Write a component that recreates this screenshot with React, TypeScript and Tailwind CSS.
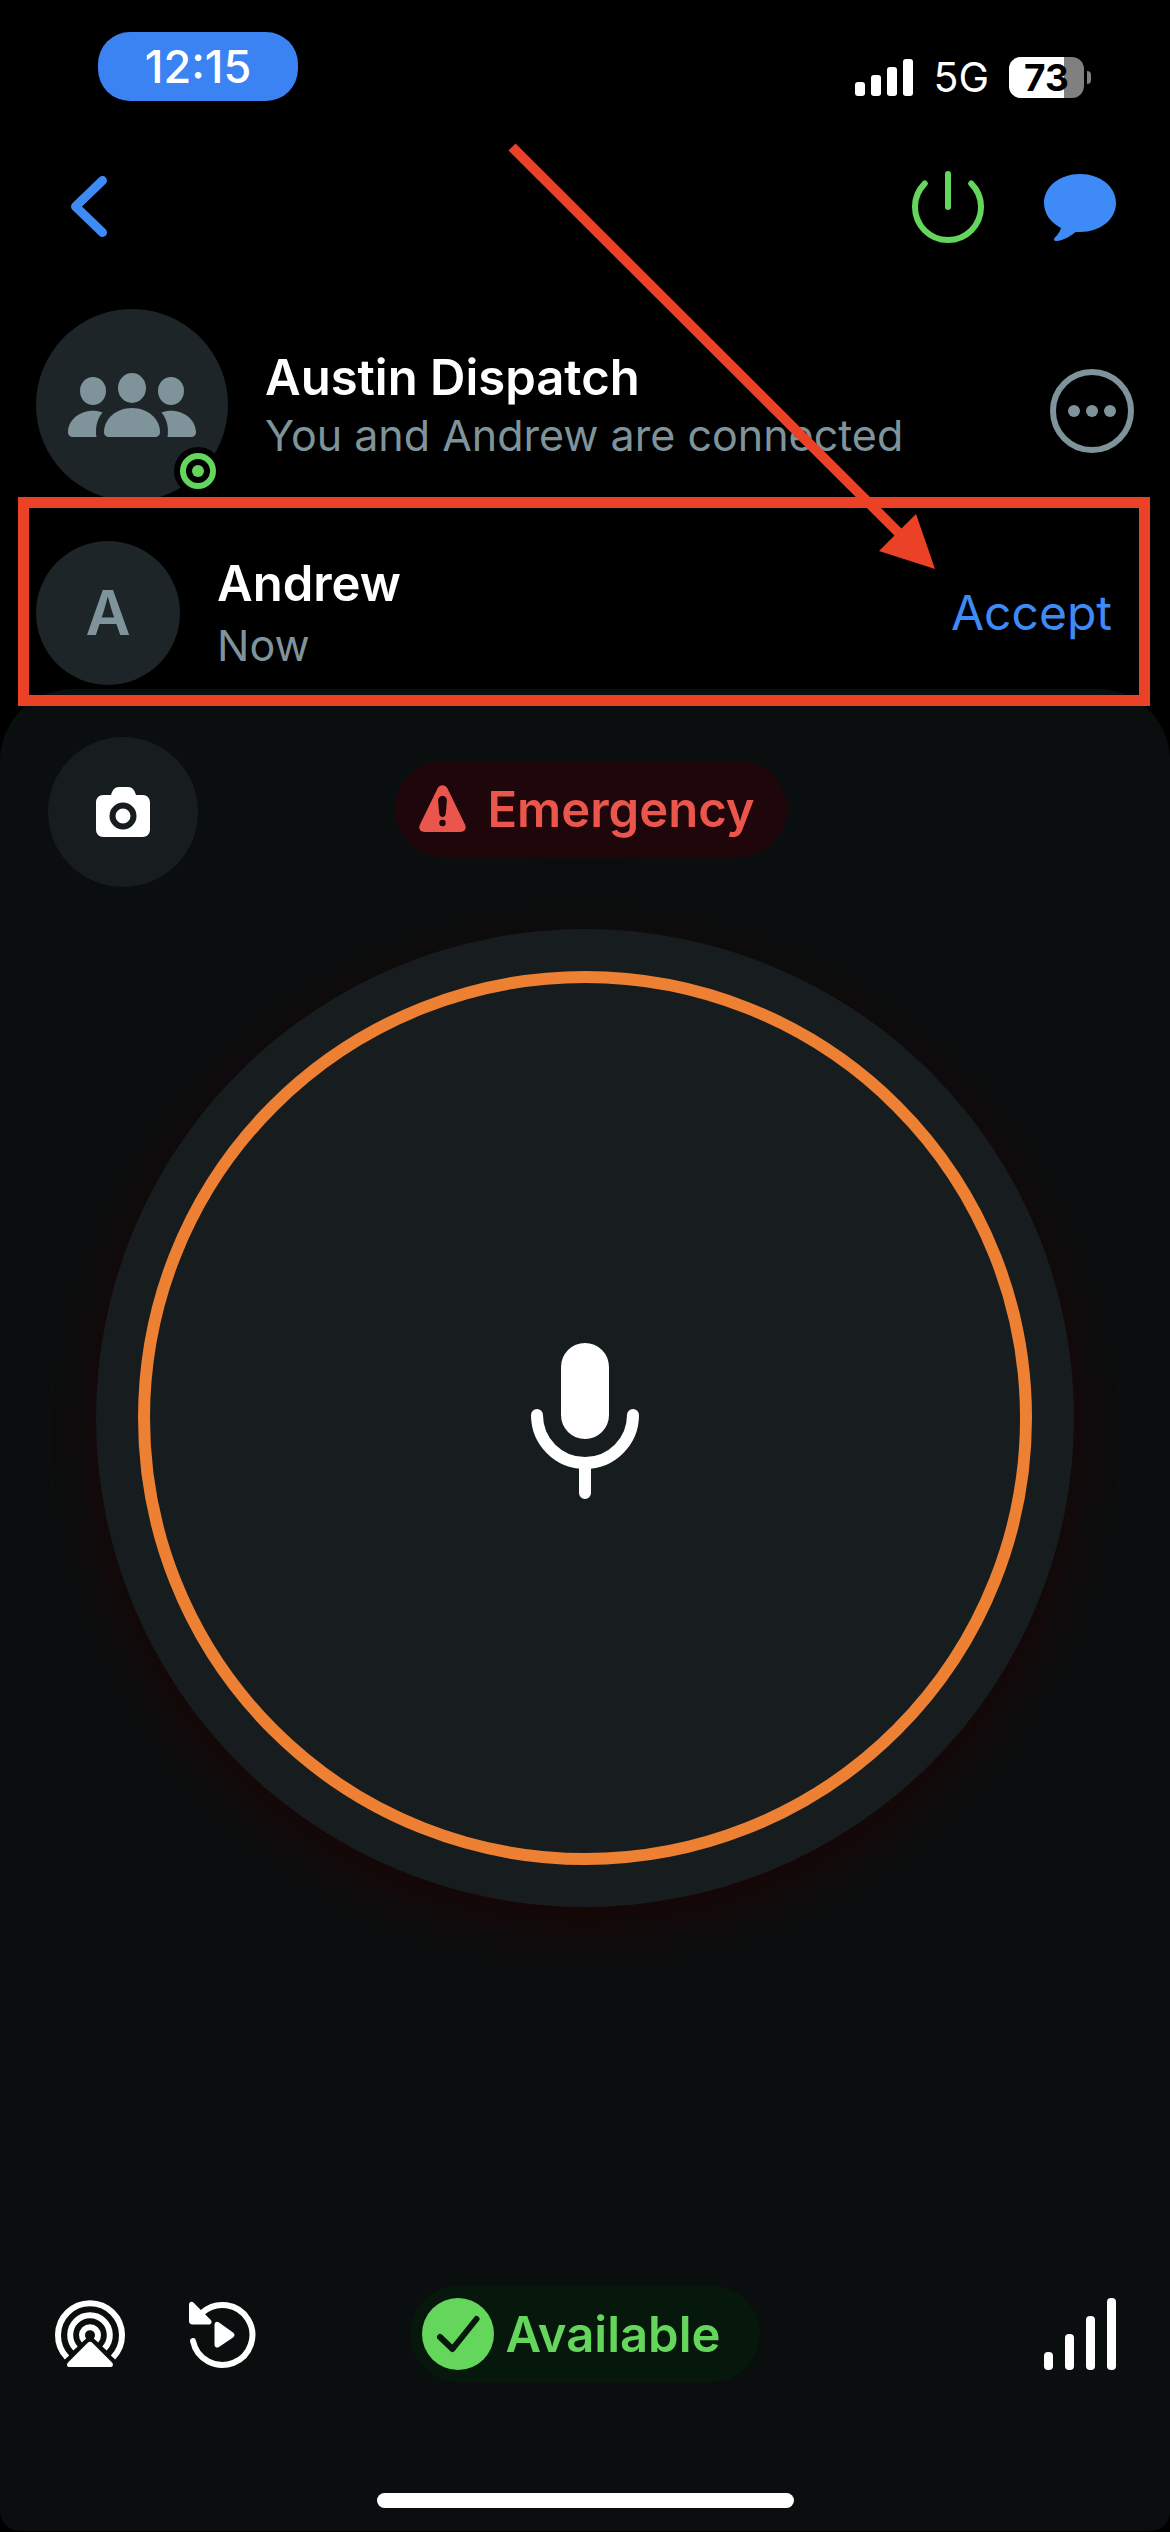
import type { ReactNode } from "react";

function SignalBars() {
  return (
    <svg width="58" height="38" viewBox="0 0 58 38" fill="white" aria-hidden="true">
      <rect x="0" y="23" width="10" height="14" rx="3" />
      <rect x="16" y="16" width="10" height="21" rx="3" />
      <rect x="32" y="8" width="10" height="29" rx="3" />
      <rect x="48" y="0" width="10" height="37" rx="3" />
    </svg>
  );
}

function Battery({ level }: { level: number }) {
  return (
    <div className="flex items-center gap-[3px]">
      <div className="relative flex h-[41px] w-[75px] items-center justify-center rounded-[12px] bg-[#808080]">
        <div className="absolute inset-y-0 left-0 rounded-l-[12px] bg-white" style={{ width: `${level}%` }} />
        <span className="relative text-[37px] leading-[41px] font-bold text-black">{level}</span>
      </div>
      <div className="h-[13px] w-1 rounded-r-full bg-[#808080]" />
    </div>
  );
}

function StatusBar() {
  return (
    <div className="flex items-end justify-between pr-[79px] pl-[98px]">
      <div className="flex h-[69px] w-[200px] items-center justify-center rounded-[32px] bg-[#3b82f3] text-[45px] leading-none font-medium">
        12:15
      </div>
      <div className="flex items-center gap-5 pb-[3px]">
        <SignalBars />
        <span className="text-[41px] leading-[41px]">5G</span>
        <Battery level={73} />
      </div>
    </div>
  );
}

function NavBar() {
  return (
    <nav className="mt-[70px] flex items-center justify-between pr-[54px] pl-[65px]">
      <button type="button" aria-label="Back">
        <svg width="48" height="72" viewBox="0 0 48 72" fill="none" stroke="#3e8bf7" strokeWidth="9" strokeLinecap="round" strokeLinejoin="round">
          <path d="M37.5 9.5 10.5 35.5l27 26" />
        </svg>
      </button>
      <div className="flex items-center gap-[60px]">
        <button type="button" aria-label="Go offline">
          <svg width="72" height="72" viewBox="0 0 72 72" fill="none" stroke="#65d65c" strokeWidth="6" strokeLinecap="round">
            <path d="M36 3v33" />
            <path d="M12.8 12.5a33 33 0 1 0 46.4 0" />
          </svg>
        </button>
        <button type="button" aria-label="Messages">
          <svg width="72" height="72" viewBox="0 0 72 72" fill="#3e8bf7">
            <path d="M36 3C16 3 0 15.500 0 32c0 10.500 6.500 19.500 17 25-1 4-3.500 7-6.300 9.800-1.500 1.800-.6 3.400 1.800 3.200C19.500 69.500 26 65.500 31.500 61h4.500c20 0 36-12.500 36-29S56 3 36 3z" />
          </svg>
        </button>
      </div>
    </nav>
  );
}

function GroupAvatar() {
  return (
    <div className="relative size-[192px] shrink-0 rounded-full bg-[#1d2528]">
      <svg viewBox="0 0 192 192" className="size-full" fill="#7f939a" aria-hidden="true">
        <ellipse cx="96" cy="79" rx="14" ry="15" />
        <ellipse cx="57" cy="82" rx="13" ry="14" />
        <ellipse cx="135" cy="82" rx="13" ry="14" />
        <path d="M68 123c0-13 12-24 28-24s28 11 28 24c0 3.500-2 5-5.500 5h-45c-3.500 0-5.500-1.500-5.500-5z" />
        <path d="M66.500 103.500c-3-1.200-6-1.700-9.500-1.700-14 0-25 9.800-25 21.500 0 3.200 2 4.700 5 4.700h23.500c-1.500-9 .5-18 6-24.500z" />
        <path d="M125.500 103.500c3-1.200 6-1.700 9.500-1.700 14 0 25 9.800 25 21.500 0 3.200-2 4.700-5 4.700h-23.500c1.500-9-.5-18-6-24.500z" />
        <circle cx="162" cy="162" r="24" fill="black" />
        <circle cx="162" cy="162" r="15" fill="black" stroke="#65d65c" strokeWidth="6" />
        <circle cx="162" cy="162" r="6" fill="#65d65c" />
      </svg>
    </div>
  );
}

function RowText({ title, detail, className }: { title: string; detail: string; className: string }) {
  return (
    <div className={className}>
      <h2 className="text-[49px] leading-[60px] font-semibold">{title}</h2>
      <p className="text-[43px] leading-[54px] text-[#7f939a]">{detail}</p>
    </div>
  );
}

function Pill({ className, icon, children }: { className: string; icon: ReactNode; children: ReactNode }) {
  return (
    <button type="button" className={`flex h-24 items-center rounded-full text-[49px] leading-none font-semibold ${className}`}>
      {icon}
      {children}
    </button>
  );
}

function TalkButton() {
  return (
    <button
      type="button"
      aria-label="Push to talk"
      className="mx-auto mt-[42px] flex aspect-square w-full max-w-[978px] rounded-full bg-[#171c1e] p-[42px] shadow-[0_18px_72px_rgba(36,0,0,0.7)]"
    >
      <span className="flex size-full items-center justify-center rounded-full border-12 border-[#ee8033]">
        <svg width="108" height="162" viewBox="0 -9 108 162" fill="none" stroke="white" strokeWidth="12" strokeLinecap="round">
          <rect x="30" y="-3" width="48" height="96" rx="24" fill="white" stroke="none" />
          <path d="M6 69a48 48 0 0 0 96 0M54 117v30" />
        </svg>
      </span>
    </button>
  );
}

function TalkPanel() {
  return (
    <main className="mt-1 flex flex-1 flex-col rounded-t-[72px] rounded-b-[20px] bg-[#0a0e0f] px-12 pt-12">
      <div className="grid grid-cols-[1fr_auto_1fr] items-center">
        <button type="button" aria-label="Camera" className="flex size-[150px] items-center justify-center rounded-full bg-[#171c1e]">
          <svg width="54" height="50" viewBox="0 0 54 50" fill="white">
            <path d="M15 8C16.500 3 18.500 0 23 0h9c4.500 0 6.500 3 8 8h6.500c4.500 0 7.500 3 7.500 7.500v27c0 4.500-3 7.500-7.500 7.500h-39C3 50 0 47 0 42.500v-27C0 11 3 8 7.500 8z" />
            <circle cx="27" cy="29" r="10.500" stroke="#171c1e" strokeWidth="6" />
          </svg>
        </button>
        <Pill
          className="mb-1.5 ml-3 gap-[20px] bg-[#1e060a] pr-8 pl-6 text-[#ea554c]"
          icon={
            <svg width="48" height="48" viewBox="0 0 48 48" fill="#ea554c" aria-hidden="true">
              <path d="M18.500 3.500c2.200-4.300 7.800-4.300 10 0l17.500 36c1.900 4-.3 7.500-4.500 7.500h-36C1.300 47-.900 43.500 1 39.500z" />
              <path d="M23.500 11c3 0 4.600 2 4.400 5l-1.200 13c-.4 4-6 4-6.400 0l-1.200-13c-.2-3 1.400-5 4.400-5z" fill="#1e060a" />
              <circle cx="23.500" cy="38" r="3.200" fill="#1e060a" />
            </svg>
          }
        >
          Emergency
        </Pill>
      </div>

      <TalkButton />

      <div className="mt-auto grid grid-cols-[1fr_auto_1fr] items-center pt-12">
        <div className="flex items-center gap-[60px] pl-[6px]">
          <button type="button" aria-label="Audio output">
            <svg width="72" height="72" viewBox="0 1 72 72" fill="none" stroke="white" strokeWidth="6">
              <path d="M13 60.500a32 32 0 1 1 46 0" />
              <path d="M21.500 51.500a19.800 19.800 0 1 1 29 0" />
              <path d="M30 43.500a8 8 0 1 1 12 0" />
              <path d="M33.500 46c1.500-1.700 3.500-1.700 5 0L58 65.500c1.800 2.200 1 4.500-1.500 4.500h-41c-2.500 0-3.300-2.300-1.500-4.500z" fill="white" stroke="none" />
            </svg>
          </button>
          <button type="button" aria-label="Replay">
            <svg width="72" height="72" viewBox="0 0 72 72" fill="none" stroke="white" strokeWidth="6" strokeLinecap="round">
              <path d="M16.500 14.500a30 30 0 1 1-9.500 28.500" />
              <path d="M3 6.500c0-2.600 2.600-3.700 4.400-1.900l17.400 17.400c1.700 1.800.7 4.500-1.900 4.500H6.500c-2.200 0-3.500-1.300-3.500-3.500z" fill="white" stroke="none" />
              <path d="M28.500 27c0-2.800 2.500-4 4.500-2.500l14 10c2 1.500 2 3.500 0 5l-14 9.500c-2 1.400-4.500.3-4.500-2.500z" fill="white" stroke="none" />
            </svg>
          </button>
        </div>
        <Pill
          className="gap-3 bg-[#06170c] pr-10 pl-3 text-[#65d65c]"
          icon={
            <svg width="72" height="72" viewBox="0 0 72 72" fill="none" aria-hidden="true">
              <circle cx="36" cy="36" r="36" fill="#65d65c" />
              <path d="M18 39l12.500 12L54.500 21" stroke="#06170c" strokeWidth="6" strokeLinecap="round" strokeLinejoin="round" />
            </svg>
          }
        >
          Available
        </Pill>
        <button type="button" aria-label="Signal strength" className="mr-[6px] justify-self-end">
          <svg width="72" height="72" viewBox="0 0 72 72" fill="white">
            <rect x="0" y="54" width="9" height="18" rx="4" />
            <rect x="21" y="36" width="9" height="36" rx="4" />
            <rect x="42" y="18" width="9" height="54" rx="4" />
            <rect x="63" y="0" width="9" height="72" rx="4" />
          </svg>
        </button>
      </div>

      <div className="mx-auto mt-[111px] mb-[23px] h-[15px] w-[417px] rounded-full bg-white" />
    </main>
  );
}

export default function App() {
  return (
    <div className="relative flex min-h-screen flex-col overflow-hidden bg-black pt-8 pb-px font-['Inter','Liberation_Sans',sans-serif] text-white">
      <StatusBar />
      <NavBar />

      <header className="mt-[66px] flex items-center pr-9 pl-9">
        <GroupAvatar />
        <RowText title="Austin Dispatch" detail="You and Andrew are connected" className="ml-[37px] flex-1" />
        <button type="button" aria-label="More options" className="mt-3">
          <svg width="84" height="84" viewBox="0 0 84 84" fill="#7f939a">
            <circle cx="42" cy="42" r="39" fill="none" stroke="#7f939a" strokeWidth="6" />
            <circle cx="24" cy="42" r="6" />
            <circle cx="42" cy="42" r="6" />
            <circle cx="60" cy="42" r="6" />
          </svg>
        </button>
      </header>

      <section className="relative mt-10 flex items-center pr-[58px] pl-9">
        <div className="flex size-36 shrink-0 items-center justify-center rounded-full bg-[#1d2528] text-[62px] leading-none font-semibold text-[#7f939a]">
          A
        </div>
        <RowText title="Andrew" detail="Now" className="ml-[37px] flex flex-1 flex-col gap-1" />
        <button type="button" className="text-[48px] leading-[60px] text-[#3e8bf7]">
          Accept
        </button>
        <div className="pointer-events-none absolute -top-11 right-5 -bottom-[21px] left-[18px] z-10 border-11 border-[#ea4127]" />
      </section>

      <TalkPanel />

      {/* arrow pointing at the Accept button */}
      <svg className="pointer-events-none absolute top-[140px] right-[230px] z-20 overflow-visible" width="430" height="430" viewBox="0 0 430 430" aria-hidden="true">
        <path d="M2 7l390 389" stroke="#ea4127" strokeWidth="10" />
        <path d="M406 374l19 55-56-18z" fill="#ea4127" />
      </svg>
    </div>
  );
}
